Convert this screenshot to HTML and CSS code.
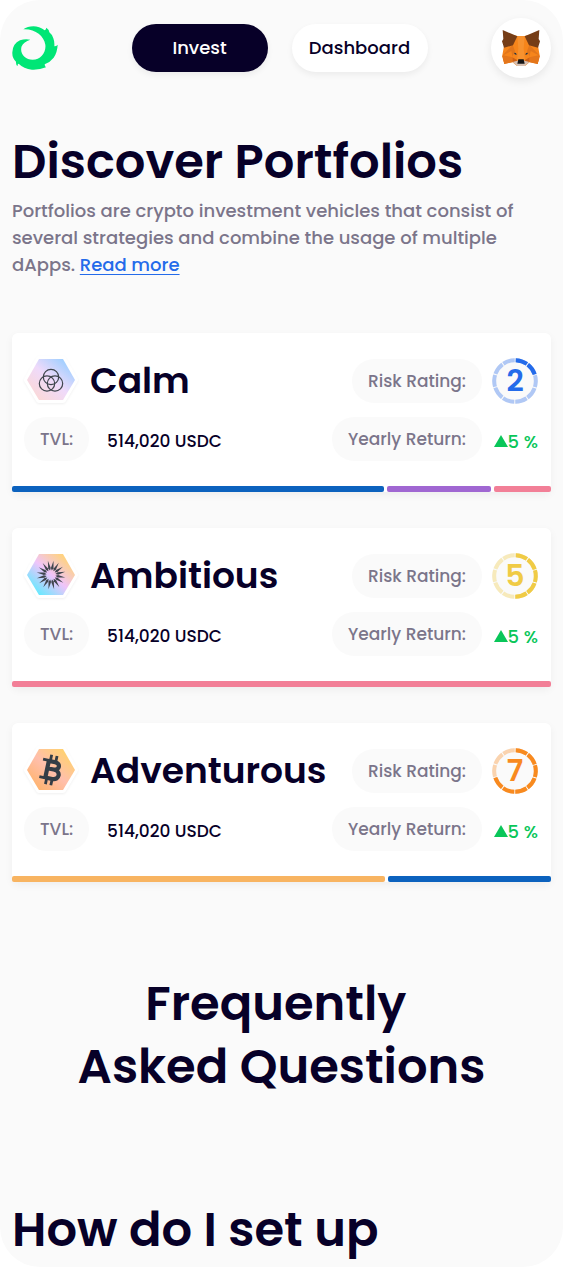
FILE: index.html
```html
<!DOCTYPE html>
<html lang="en">
	<head>
		<meta charset="UTF-8">
		<meta name="viewport" content="width=device-width, initial-scale=1">
		<title>Discover Portfolios</title>
		<link rel="stylesheet" href="styles.css">
	</head>
	<body>
		<div class="page">
			<header class="header">
				<a class="logo" href="#" aria-label="Home">
					<svg width="46" height="44" viewBox="35 47 138 132">
						<path fill="#00e676" d="M69 57C85 46 112 43 133 60Q137 58 138 52Q146 57 147 66Q157 74 159 84Q163 94 162 108Q168 108 172 103Q171 126 160 142Q149 156 133 162Q133 168 137 171Q118 179 95 178Q70 175 55 160Q51 161 52 168Q46 164 47 154Q35 142 36 126Q37 100 59 90Q75 84 90 88Q70 94 64 108C57 128 74 148 97 148C121 148 138 126 135 103C131 77 104 55 69 57Z"/>
					</svg>
				</a>
				<nav class="nav">
					<button class="nav-btn active" type="button">Invest</button>
					<button class="nav-btn" type="button">Dashboard</button>
				</nav>
				<button class="wallet" type="button" aria-label="Wallet">
					<svg width="38" height="36" viewBox="64 74 114 108">
						<path fill="#f6851b" d="M70 122L96 88L110 92H132L146 88L172 122L177 150L171 176L147 170L134 181H108L95 170L71 176L65 150Z"/>
						<path fill="#e2761b" d="M66 150L96 118L103 138L94 156L71 176ZM176 150L146 118L139 138L148 156L171 176Z"/>
						<path fill="#f7922f" d="M110 92H132L129 130L133 166H109L113 130Z"/>
						<path fill="#e4761b" d="M64 151L94 156L96 171L71 176ZM178 151L148 156L146 171L171 176Z"/>
						<path fill="#f6851b" d="M68 150L92 137L96 156ZM174 150L150 137L146 156Z"/>
						<path fill="#763d16" d="M66 74L110 93L97 120L70 127L64 108L68 101ZM176 74L132 93L145 120L172 127L178 108L174 101Z"/>
						<path fill="#cd6116" d="M95 156L109 164L107 172L96 170ZM147 156L133 164L135 172L146 170Z"/>
						<path fill="#d7c1b3" d="M96 170L110 166H132L146 170L132 182H110Z"/>
						<path fill="#233447" d="M100 142L106 143L108 149L102 147ZM142 142L136 143L134 149L140 147Z"/>
						<path fill="#161616" d="M113 162H129L132 175H110Z"/>
					</svg>
				</button>
			</header>

			<main>
				<section class="intro">
					<h1 class="title">Discover Portfolios</h1>
					<p class="desc">Portfolios are crypto investment vehicles that consist of several strategies and combine the usage of multiple dApps. <a href="#">Read more</a></p>
				</section>

				<section class="portfolios">
					<article class="card">
						<div class="card-body">
							<div class="row">
								<svg class="hex" width="54" height="44" viewBox="0 3 54 44">
									<defs>
										<linearGradient id="calmBg" x1="0" y1="1" x2="1" y2="0">
											<stop offset="0.1" stop-color="#fbd8d6"/>
											<stop offset="0.5" stop-color="#efdafa"/>
											<stop offset="0.85" stop-color="#a5d0ff"/>
										</linearGradient>
									</defs>
									<path class="hex-edge" d="M15 3H39L51 24L39 44H15L3 24Z"/>
									<path fill="url(#calmBg)" d="M15 3H39L51 24L39 44H15L3 24Z"/>
									<g fill="none" stroke="#3f454d" stroke-width="1.2">
										<circle cx="27" cy="21" r="7.700"/>
										<circle cx="23" cy="27.500" r="7.700"/>
										<circle cx="31" cy="27.500" r="7.700"/>
									</g>
								</svg>
								<h2 class="name">Calm</h2>
								<span class="pill">Risk Rating:</span>
								<div class="rating blue">
									<svg width="46" height="46" viewBox="0 0 46 46">
										<circle class="ring" cx="23" cy="23" r="20.800" pathLength="100" stroke-dasharray="9.200 0.800"/>
										<circle class="ring on" cx="23" cy="23" r="20.800" pathLength="100" stroke-dasharray="9.200 0.800 9.200 80.800"/>
									</svg>
									<span>2</span>
								</div>
							</div>
							<div class="row">
								<span class="pill">TVL:</span>
								<span class="amount">514,020 USDC</span>
								<span class="pill">Yearly Return:</span>
								<span class="gain"><i class="up"></i>5 %</span>
							</div>
						</div>
						<div class="bar">
							<span class="c-blue" style="flex-grow: 372"></span>
							<span class="c-purple" style="flex-grow: 104"></span>
							<span class="c-pink" style="flex-grow: 57"></span>
						</div>
					</article>

					<article class="card">
						<div class="card-body">
							<div class="row">
								<svg class="hex" width="54" height="44" viewBox="0 3 54 44">
									<defs>
										<linearGradient id="ambitiousBg" x1="0" y1="1" x2="1" y2="0">
											<stop offset="0.1" stop-color="#5cecff"/>
											<stop offset="0.5" stop-color="#efc4fa"/>
											<stop offset="0.85" stop-color="#ffd280"/>
										</linearGradient>
										<g id="rays">
											<path id="ray" d="M0 -14.500L1.300 -7L0 -4.500L-1.300 -7Z"/>
											<use href="#ray" transform="rotate(22.500)"/>
											<use href="#ray" transform="rotate(45)"/>
											<use href="#ray" transform="rotate(67.500)"/>
										</g>
									</defs>
									<path class="hex-edge" d="M15 3H39L51 24L39 44H15L3 24Z"/>
									<path fill="url(#ambitiousBg)" d="M15 3H39L51 24L39 44H15L3 24Z"/>
									<g fill="#3f454d" transform="translate(27 24) rotate(10)">
										<use href="#rays"/>
										<use href="#rays" transform="rotate(90)"/>
										<use href="#rays" transform="rotate(180)"/>
										<use href="#rays" transform="rotate(270)"/>
									</g>
								</svg>
								<h2 class="name">Ambitious</h2>
								<span class="pill">Risk Rating:</span>
								<div class="rating yellow">
									<svg width="46" height="46" viewBox="0 0 46 46">
										<circle class="ring" cx="23" cy="23" r="20.800" pathLength="100" stroke-dasharray="9.200 0.800"/>
										<circle class="ring on" cx="23" cy="23" r="20.800" pathLength="100" stroke-dasharray="9.200 0.800 9.200 0.800 9.200 0.800 9.200 0.800 9.200 50.800"/>
									</svg>
									<span>5</span>
								</div>
							</div>
							<div class="row">
								<span class="pill">TVL:</span>
								<span class="amount">514,020 USDC</span>
								<span class="pill">Yearly Return:</span>
								<span class="gain"><i class="up"></i>5 %</span>
							</div>
						</div>
						<div class="bar">
							<span class="c-pink" style="flex-grow: 1"></span>
						</div>
					</article>

					<article class="card">
						<div class="card-body">
							<div class="row">
								<svg class="hex" width="54" height="44" viewBox="0 3 54 44">
									<defs>
										<linearGradient id="adventurousBg" x1="0" y1="1" x2="1" y2="0">
											<stop offset="0.1" stop-color="#ffb36b"/>
											<stop offset="0.5" stop-color="#ffbfac"/>
											<stop offset="0.85" stop-color="#ffd073"/>
										</linearGradient>
									</defs>
									<path class="hex-edge" d="M15 3H39L51 24L39 44H15L3 24Z"/>
									<path fill="url(#adventurousBg)" d="M15 3H39L51 24L39 44H15L3 24Z"/>
									<g fill="none" stroke="#343d46" transform="translate(27 24) rotate(12)">
										<path stroke-width="4.200" d="M-4 -9V9M-4 -8.500H2.500C8.500 -8.500 8.500 -1 2.500 -1H-4M2.500 -1C10.500 -1 10.500 8.500 3 8.500H-4"/>
										<path stroke-width="2.800" d="M-10 -9H-4M-10 9H-4M-2.500 -15V-9M3 -15V-9M-2.500 9V15M3 9V15"/>
									</g>
								</svg>
								<h2 class="name">Adventurous</h2>
								<span class="pill">Risk Rating:</span>
								<div class="rating orange">
									<svg width="46" height="46" viewBox="0 0 46 46">
										<circle class="ring" cx="23" cy="23" r="20.800" pathLength="100" stroke-dasharray="9.200 0.800"/>
										<circle class="ring on" cx="23" cy="23" r="20.800" pathLength="100" stroke-dasharray="9.200 0.800 9.200 0.800 9.200 0.800 9.200 0.800 9.200 0.800 9.200 0.800 9.200 30.800"/>
									</svg>
									<span>7</span>
								</div>
							</div>
							<div class="row">
								<span class="pill">TVL:</span>
								<span class="amount">514,020 USDC</span>
								<span class="pill">Yearly Return:</span>
								<span class="gain"><i class="up"></i>5 %</span>
							</div>
						</div>
						<div class="bar">
							<span class="c-orange" style="flex-grow: 372"></span>
							<span class="c-blue" style="flex-grow: 163"></span>
						</div>
					</article>
				</section>

				<section class="faq">
					<h2 class="title faq-title">Frequently&nbsp;<br>Asked Questions</h2>
					<h3 class="title">How do I set up</h3>
				</section>
			</main>
		</div>
	</body>
</html>
```

FILE: styles.css
```css
*{
	margin: 0;
	padding: 0;
	box-sizing: border-box;
}
body{
	background-color: #fff;
	color: #070028;
	font-family: Poppins, Inter, "Liberation Sans", sans-serif;
	font-size: 18px;
	font-weight: 500;
}
button{
	border: none;
	font: inherit;
	color: inherit;
	cursor: pointer;
}
svg{
	display: block;
}
.page{
	background-color: #fafafa;
	border-radius: 40px;
	padding: 18px 12px 6px;
}

/* header */
.header{
	display: flex;
	align-items: center;
	justify-content: space-between;
}
.logo{
	width: 56px;
}
.nav{
	display: flex;
	gap: 24px;
}
.nav-btn{
	width: 136px;
	height: 48px;
	padding-bottom: 2px;
	border-radius: 24px;
	background-color: #fff;
	box-shadow: 0 3px 6px rgba(0, 0, 0, 0.06);
}
.nav-btn.active{
	background-color: #070028;
	color: #fff;
}
.wallet{
	display: flex;
	align-items: center;
	justify-content: center;
	width: 60px;
	height: 60px;
	border-radius: 50%;
	background-color: #fff;
	box-shadow: 0 3px 8px rgba(0, 0, 0, 0.08);
}

/* intro */
.intro{
	padding: 52px 0 55px;
}
.title{
	font-size: 48px;
	line-height: 63px;
	font-weight: 600;
}
.desc{
	margin-top: 4px;
	line-height: 27px;
	color: #7b758a;
}
.desc a{
	color: #246bea;
	text-underline-offset: 3px;
}

/* portfolio cards */
.portfolios{
	display: grid;
	gap: 36px;
}
.card{
	background-color: #fff;
	border-radius: 6px;
	box-shadow: 0 3px 8px rgba(0, 0, 0, 0.05);
}
.card-body{
	display: grid;
	gap: 12px;
	padding: 25px 13px 24px 12px;
}
.row{
	display: flex;
	align-items: center;
	height: 46px;
}
.hex{
	overflow: visible;
}
.hex-edge{
	fill: #fff;
	stroke: #fff;
	stroke-width: 6px;
	stroke-linejoin: round;
	filter: drop-shadow(0 1px 1px rgba(0, 0, 0, 0.06));
}
.name{
	flex: 1;
	margin-left: 12px;
	font-size: 36px;
	line-height: 46px;
	font-weight: 600;
}
.pill{
	padding: 0 16px;
	border-radius: 22px;
	background-color: #fafafa;
	color: #7b758a;
	font-size: 17px;
	line-height: 44px;
	white-space: nowrap;
}
.amount{
	flex: 1;
	margin-left: 18px;
	padding-top: 4px;
	font-size: 17px;
}
.rating{
	display: grid;
	place-items: center;
	margin-left: 10px;
	border-radius: 50%;
	background-color: #fafafa;
	font-size: 30px;
	line-height: 46px;
	font-weight: 600;
}
.rating svg,
.rating span{
	grid-area: 1 / 1;
}
.rating svg{
	transform: rotate(-88deg);
}
.ring{
	fill: none;
	stroke: currentColor;
	stroke-width: 4px;
	stroke-opacity: 0.35;
}
.ring.on{
	stroke-opacity: 1;
}
.blue{
	color: #246bea;
}
.yellow{
	color: #f0cb45;
}
.orange{
	color: #f88a1f;
}
.gain{
	display: flex;
	align-items: center;
	justify-content: flex-end;
	width: 46px;
	margin-left: 10px;
	padding-top: 4px;
	color: #09c659;
	white-space: nowrap;
}
.up{
	border: 7px solid transparent;
	border-top: none;
	border-bottom: 12px solid #09c659;
}
.bar{
	display: flex;
	gap: 3px;
}
.bar span{
	flex-basis: 0;
	height: 6px;
	border-radius: 2px;
}
.c-blue{
	background-color: #0c62be;
}
.c-purple{
	background-color: #a067d2;
}
.c-pink{
	background-color: #f27f97;
}
.c-orange{
	background-color: #f8b461;
}

/* faq */
.faq{
	padding-top: 90px;
}
.faq-title{
	margin-bottom: 100px;
	text-align: center;
}
```
